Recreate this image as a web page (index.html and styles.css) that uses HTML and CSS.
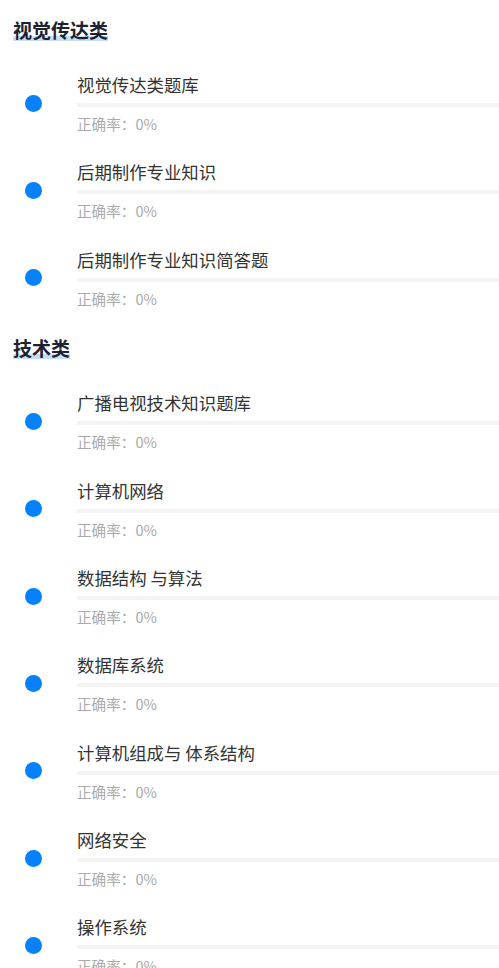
FILE: index.html
```html
<!DOCTYPE html>
<html lang="zh-CN">
<head>
<meta charset="utf-8">
<link rel="stylesheet" href="styles.css">
</head>
<body>
<div class="page">
  <section class="group">
    <h2 class="group-title"><span>视觉传达类</span></h2>
    <div class="item"><div class="dot"></div><div class="info"><div class="name">视觉传达类题库</div><div class="bar"></div><div class="rate">正确率：0%</div></div></div>
    <div class="item"><div class="dot"></div><div class="info"><div class="name">后期制作专业知识</div><div class="bar"></div><div class="rate">正确率：0%</div></div></div>
    <div class="item"><div class="dot"></div><div class="info"><div class="name">后期制作专业知识简答题</div><div class="bar"></div><div class="rate">正确率：0%</div></div></div>
  </section>
  <section class="group">
    <h2 class="group-title"><span>技术类</span></h2>
    <div class="item"><div class="dot"></div><div class="info"><div class="name">广播电视技术知识题库</div><div class="bar"></div><div class="rate">正确率：0%</div></div></div>
    <div class="item"><div class="dot"></div><div class="info"><div class="name">计算机网络</div><div class="bar"></div><div class="rate">正确率：0%</div></div></div>
    <div class="item"><div class="dot"></div><div class="info"><div class="name">数据结构 与算法</div><div class="bar"></div><div class="rate">正确率：0%</div></div></div>
    <div class="item"><div class="dot"></div><div class="info"><div class="name">数据库系统</div><div class="bar"></div><div class="rate">正确率：0%</div></div></div>
    <div class="item"><div class="dot"></div><div class="info"><div class="name">计算机组成与 体系结构</div><div class="bar"></div><div class="rate">正确率：0%</div></div></div>
    <div class="item"><div class="dot"></div><div class="info"><div class="name">网络安全</div><div class="bar"></div><div class="rate">正确率：0%</div></div></div>
    <div class="item"><div class="dot"></div><div class="info"><div class="name">操作系统</div><div class="bar"></div><div class="rate">正确率：0%</div></div></div>
  </section>
</div>
</body>
</html>
```

FILE: styles.css
```css
html, body {
  margin: 0;
  padding: 0;
  background: #ffffff;
}
body {
  font-family: "Noto Sans CJK SC", "Noto Sans", sans-serif;
  overflow: hidden;
}
.page {
  padding-top: 18.5px;
}
.group + .group {
  margin-top: 14px;
}
.group-title {
  margin: 0 0 18.5px 13px;
  height: 24px;
  font-size: 19px;
  line-height: 21px;
  font-weight: 700;
  color: #1d2130;
}
.group-title span {
  display: inline-block;
  padding-bottom: 3px;
  background-color: transparent;
  background-image: linear-gradient(#c6def7, #c6def7);
  background-repeat: no-repeat;
  background-position: 0 calc(100% - 2px);
  background-size: 100% 5px;
}
.item {
  display: flex;
  align-items: flex-start;
  padding: 14px 0 14.33px 0;
}
.dot {
  flex: none;
  width: 17px;
  height: 17px;
  border-radius: 50%;
  background: #0581fb;
  margin: 19.5px 35px 0 25px;
}
.info {
  flex: 1;
  min-width: 0;
}
.name {
  margin-top: -1px;
  font-size: 17.4px;
  line-height: 22px;
  color: #333333;
  white-space: nowrap;
}
.bar {
  margin-top: 7px;
  height: 4px;
  background: #f4f4f4;
}
.rate {
  margin-top: 7px;
  font-size: 14.6px;
  line-height: 20px;
  color: #aaaaaa;
}
```
